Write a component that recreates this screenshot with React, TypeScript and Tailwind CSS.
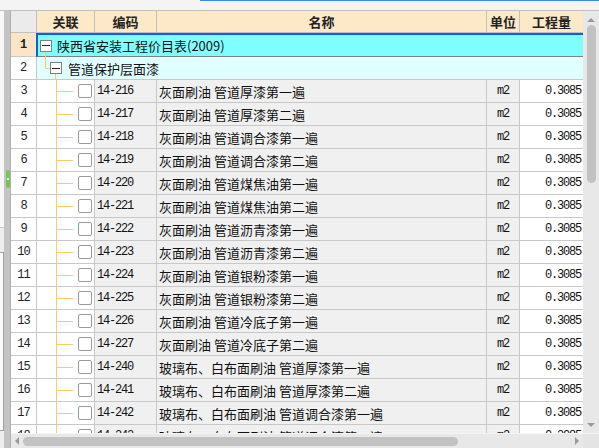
import React from "react";

const rows: [number, string, string][] = [
  [3, "14-216", "灰面刷油 管道厚漆第一遍"],
  [4, "14-217", "灰面刷油 管道厚漆第二遍"],
  [5, "14-218", "灰面刷油 管道调合漆第一遍"],
  [6, "14-219", "灰面刷油 管道调合漆第二遍"],
  [7, "14-220", "灰面刷油 管道煤焦油第一遍"],
  [8, "14-221", "灰面刷油 管道煤焦油第二遍"],
  [9, "14-222", "灰面刷油 管道沥青漆第一遍"],
  [10, "14-223", "灰面刷油 管道沥青漆第二遍"],
  [11, "14-224", "灰面刷油 管道银粉漆第一遍"],
  [12, "14-225", "灰面刷油 管道银粉漆第二遍"],
  [13, "14-226", "灰面刷油 管道冷底子第一遍"],
  [14, "14-227", "灰面刷油 管道冷底子第二遍"],
  [15, "14-240", "玻璃布、白布面刷油 管道厚漆第一遍"],
  [16, "14-241", "玻璃布、白布面刷油 管道厚漆第二遍"],
  [17, "14-242", "玻璃布、白布面刷油 管道调合漆第一遍"],
  [18, "14-243", "玻璃布、白布面刷油 管道调合漆第二遍"],
];

function MinusBox() {
  return (
    <div className="w-[12px] h-[12px] shrink-0 border border-[#808080] bg-white flex items-center justify-center">
      <div className="w-[8px] h-[1px] bg-[#222]" />
    </div>
  );
}

function DataRow({ n, code, name }: { n: number; code: string; name: string }) {
  return (
    <div className="flex h-[23px] shrink-0 border-b border-[#c8c8c8]">
      <div className="w-[26px] shrink-0 border-r border-[#c8c8c8] bg-white flex items-center justify-center font-['Liberation_Mono',monospace] text-[12px] tracking-[-1px] text-[#222]">
        {n}
      </div>
      <div className="w-[58px] shrink-0 border-r border-[#c8c8c8] bg-white flex items-center">
        <div className="w-[19px] shrink-0" />
        <div className="w-[1px] self-stretch bg-[#fcc86a] shrink-0" />
        <div className="w-[16px] h-[1px] bg-[#fcc86a] shrink-0" />
        <div className="ml-[5px] w-[14px] h-[14px] shrink-0 rounded-[2px] border border-[#9a9a9a] bg-white" />
      </div>
      <div className="w-[62px] shrink-0 border-r border-[#c8c8c8] bg-[#f0f0f0] flex items-center pl-[2px] font-['Liberation_Mono',monospace] text-[12px] tracking-[-1.2px] text-[#111]">
        {code}
      </div>
      <div className="w-[330px] shrink-0 border-r border-[#c8c8c8] bg-[#f0f0f0] flex items-center pl-[2px] font-['Noto_Sans_CJK_SC',sans-serif] text-[13px] leading-none text-[#111] whitespace-pre">
        {name}
      </div>
      <div className="w-[33px] shrink-0 border-r border-[#c8c8c8] bg-[#f0f0f0] flex items-center justify-center font-['Liberation_Mono',monospace] text-[12px] tracking-[-1.2px] text-[#111]">
        m2
      </div>
      <div className="w-[63px] shrink-0 bg-white flex items-center justify-end pr-[2px] font-['Liberation_Mono',monospace] text-[12px] tracking-[-1.2px] text-[#111]">
        0.3085
      </div>
    </div>
  );
}

export default function App() {
  return (
    <div className="w-[599px] h-[448px] flex flex-col overflow-hidden bg-white">
      {/* top strip */}
      <div className="h-[11px] shrink-0 bg-[#f4f4f4] border-b border-[#c0c0c0] flex">
        <div className="w-[200px]" />
        <div className="flex-1 h-[1px] bg-[#3c8cf0]" />
      </div>

      <div className="flex flex-1 min-h-0">
        {/* left panel edge */}
        <div className="w-[4px] shrink-0 flex flex-col bg-[#f8f8f8]">
          <div className="h-[216px]" />
          <div className="flex-1 border-t border-[#c8c8c8] bg-[#eeeeee] flex flex-col pt-[24px] pb-[17px]">
            <div className="flex-1 border-t border-r border-b border-[#a0a0a0] bg-[#fafafa]" />
          </div>
        </div>
        {/* splitter */}
        <div className="w-[7px] shrink-0 bg-[#c4c4c4] border-r border-[#b0b0b0] flex flex-col pl-[2px] pt-[159px]">
          <div className="w-[4px] h-[18px] rounded-[2px] bg-[#7cc258] flex items-center justify-center">
            <div className="w-[2px] h-[2px] bg-[#e8f5e0]" />
          </div>
        </div>

        {/* grid */}
        <div className="flex-1 min-w-0 flex flex-col">
          <div className="flex flex-1 min-h-0">
            <div className="flex-1 min-w-0 flex flex-col overflow-hidden">
              {/* header */}
              <div className="flex h-[22px] shrink-0 border-b border-[#c0c0c0] font-['Noto_Sans_CJK_SC',sans-serif] text-[13px] font-bold leading-none text-[#222]">
                <div className="w-[26px] shrink-0 border-r border-[#c0c0c0] bg-[#ebebeb]" />
                <div className="w-[58px] shrink-0 border-r border-[#c0c0c0] bg-[#fde8c8] flex items-center justify-center">关联</div>
                <div className="w-[62px] shrink-0 border-r border-[#c0c0c0] bg-[#fde8c8] flex items-center justify-center">编码</div>
                <div className="w-[330px] shrink-0 border-r border-[#c0c0c0] bg-[#fde8c8] flex items-center justify-center">名称</div>
                <div className="w-[33px] shrink-0 border-r border-[#c0c0c0] bg-[#fde8c8] flex items-center justify-center">单位</div>
                <div className="w-[63px] shrink-0 bg-[#fde8c8] flex items-center justify-center">工程量</div>
              </div>

              {/* row 1 */}
              <div className="flex h-[24px] shrink-0">
                <div className="w-[25px] shrink-0 bg-[#fde4c4] border-b border-[#c8c8c8] flex items-center justify-center font-['Liberation_Mono',monospace] text-[12px] font-bold text-[#222]">
                  1
                </div>
                <div className="flex-1 border-t-2 border-l-2 border-[#0a5cf5] border-b border-b-[#808080] bg-[#80ffff] flex items-center pl-[2px] font-['Noto_Sans_CJK_SC',sans-serif] text-[13px] leading-none text-[#111]">
                  <div className="relative">
                    <MinusBox />
                    <div className="absolute left-[5px] top-[12px] w-[1px] h-[6px] bg-[#fcc86a]" />
                  </div>
                  <span className="ml-[5px]">陕西省安装工程价目表(2009)</span>
                </div>
              </div>

              {/* row 2 */}
              <div className="flex h-[23px] shrink-0 border-b border-[#c8c8c8]">
                <div className="w-[26px] shrink-0 border-r border-[#c8c8c8] bg-white flex items-center justify-center font-['Liberation_Mono',monospace] text-[12px] text-[#222]">
                  2
                </div>
                <div className="flex-1 bg-[#e0ffff] flex items-center font-['Noto_Sans_CJK_SC',sans-serif] text-[13px] leading-none text-[#111]">
                  <div className="w-[8px] shrink-0" />
                  <div className="w-[5px] self-stretch shrink-0 flex flex-col">
                    <div className="h-[12px] border-l border-b border-[#fcc86a]" />
                  </div>
                  <div className="relative">
                    <MinusBox />
                    <div className="absolute left-[5px] top-[12px] w-[1px] h-[6px] bg-[#fcc86a]" />
                  </div>
                  <span className="ml-[6px]">管道保护层面漆</span>
                </div>
              </div>

              {rows.map(([n, code, name]) => (
                <DataRow key={n} n={n} code={code} name={name} />
              ))}
            </div>

            {/* vertical scrollbar */}
            <div className="w-[16px] shrink-0 bg-[#e8e8e8] flex flex-col items-center">
              <div className="h-[14px] flex items-end pb-[3px]">
                <div className="w-0 h-0 border-l-[4px] border-r-[4px] border-b-[4px] border-l-transparent border-r-transparent border-b-[#9a9a9a]" />
              </div>
              <div className="w-[9px] h-[158px] rounded-full bg-[#c2c2c2]" />
              <div className="flex-1" />
              <div className="h-[12px] flex items-start pt-[2px]">
                <div className="w-0 h-0 border-l-[4px] border-r-[4px] border-t-[4px] border-l-transparent border-r-transparent border-t-[#9a9a9a]" />
              </div>
            </div>
          </div>

          {/* horizontal scrollbar */}
          <div className="h-[15px] shrink-0 flex bg-[#e8e8e8] border-t border-[#f4f4f4]">
            <div className="flex-1 flex items-center">
              <div className="w-[12px] flex justify-center">
                <div className="w-0 h-0 border-t-[4px] border-b-[4px] border-r-[4px] border-t-transparent border-b-transparent border-r-[#9a9a9a]" />
              </div>
              <div className="w-[435px] h-[9px] rounded-full bg-[#c2c2c2]" />
              <div className="flex-1" />
              <div className="w-[12px] flex justify-center">
                <div className="w-0 h-0 border-t-[4px] border-b-[4px] border-l-[4px] border-t-transparent border-b-transparent border-l-[#9a9a9a]" />
              </div>
            </div>
            <div className="w-[16px] shrink-0 bg-[#e4e4e4]" />
          </div>
        </div>
      </div>
    </div>
  );
}
